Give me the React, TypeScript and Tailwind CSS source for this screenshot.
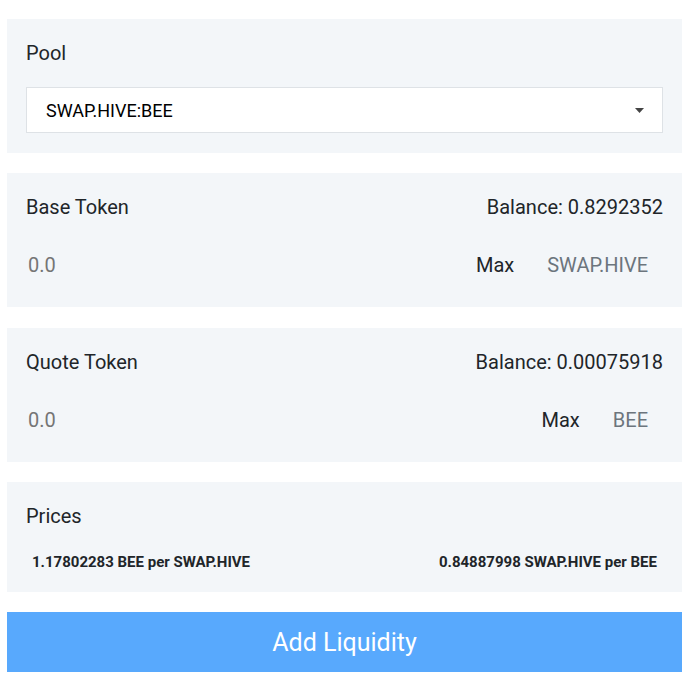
import React from "react";

function Panel({ children }: { children: React.ReactNode }) {
  return <div className="bg-[#f3f6f9] px-[19px] pt-[19px] pb-[19px]">{children}</div>;
}

function TokenPanel({ label, balance, token }: { label: string; balance: string; token: string }) {
  return (
    <Panel>
      <div className="flex h-[29px] items-center justify-between pt-px leading-[28px]">
        <span>{label}</span>
        <span>Balance: {balance}</span>
      </div>
      <div className="mt-[21px] flex h-[46px] items-center">
        <input
          className="min-w-0 flex-1 bg-transparent pl-[2px] text-[#212529] outline-none placeholder:text-[#757575]"
          placeholder="0.0"
        />
        <span className="text-[#212529]">Max</span>
        <span className="pl-[33px] pr-[15px] text-[#6c757d]">{token}</span>
      </div>
    </Panel>
  );
}

export default function App() {
  return (
    <div
      className="flex w-[698px] flex-col gap-[20px] bg-white pl-[7px] pr-[16px] pt-[19px] text-[20px] text-[#212529]"
      style={{ fontFamily: "Roboto, 'Liberation Sans', sans-serif" }}
    >
      <Panel>
        <div className="h-[29px] pt-px leading-[28px]">Pool</div>
        <div className="mt-[20px] mb-px flex h-[46px] items-center justify-between border border-[#dee2e6] bg-white pl-[19px] pr-[18px]">
          <span className="text-[18px] text-black">SWAP.HIVE:BEE</span>
          <svg width="9" height="5" viewBox="0 0 9 5" className="mt-[1px]">
            <path d="M0 0 H9 L4.5 5 Z" fill="#444" />
          </svg>
        </div>
      </Panel>
      <TokenPanel label="Base Token" balance="0.8292352" token="SWAP.HIVE" />
      <div className="mt-px">
        <TokenPanel label="Quote Token" balance="0.00075918" token="BEE" />
      </div>
      <Panel>
        <div className="h-[29px] pt-px leading-[28px]">Prices</div>
        <div className="mt-[21px] flex h-[22px] items-center justify-between px-[6px] text-[15px] font-bold text-[#212529]">
          <span>1.17802283 BEE per SWAP.HIVE</span>
          <span>0.84887998 SWAP.HIVE per BEE</span>
        </div>
      </Panel>
      <button className="mb-[22px] flex h-[60px] items-center justify-center bg-[#58a9fd] pt-px text-[25px] text-white">
        Add Liquidity
      </button>
    </div>
  );
}
